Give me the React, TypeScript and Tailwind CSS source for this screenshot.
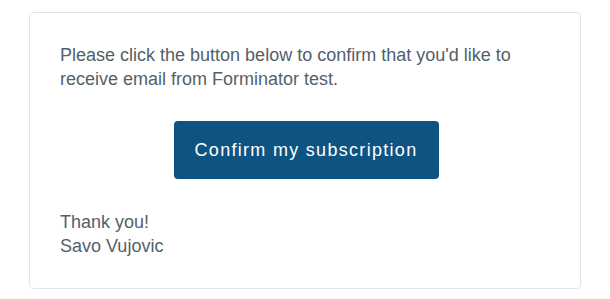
export default function App() {
  return (
    <div
      className="w-[610px] h-[299px] bg-white pt-3 pl-[29px]"
      style={{ fontFamily: '"Liberation Sans", Arial, sans-serif' }}
    >
      <div className="w-[552px] h-[277px] border border-[#e1e5ea] rounded-[4px] p-[30px] text-[18px] leading-[24px] text-[#535f6b]">
        <p>
          Please click the button below to confirm that you'd like to
          <br />
          receive email from Forminator test.
        </p>
        <div className="flex justify-center mt-[30px]">
          <a className="ml-[2px] inline-flex items-center justify-center w-[265px] h-[58px] rounded-[4px] bg-[#0e5483] text-white text-[18px] tracking-[1.3px]">
            Confirm my subscription
          </a>
        </div>
        <p className="mt-[31px]">
          Thank you!
          <br />
          Savo Vujovic
        </p>
      </div>
    </div>
  );
}
